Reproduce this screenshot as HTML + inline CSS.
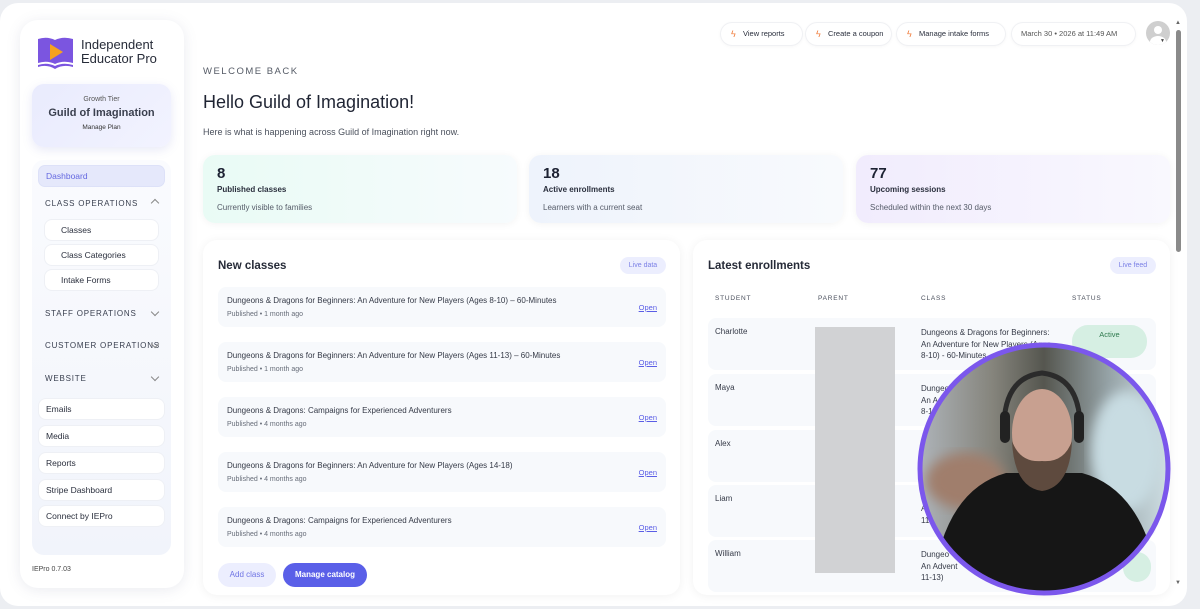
<!DOCTYPE html>
<html><head><meta charset="utf-8"><style>
*{box-sizing:border-box;margin:0;padding:0}
body{width:1200px;height:609px;overflow:hidden;background:#eceef2;font-family:"Liberation Sans",sans-serif;color:#1f2433;position:relative}
.app{position:absolute;left:0;top:3px;width:1187px;height:603px;background:#fff;border-radius:18px}
.abs{position:absolute}
.side{left:20px;top:20px;width:164px;height:568px;background:#fff;border-radius:18px;box-shadow:0 2px 14px rgba(90,100,140,.13)}
.tier{left:32px;top:84px;width:139px;height:63px;border-radius:12px;background:linear-gradient(135deg,#e9ebfd,#f2f3ff);box-shadow:0 3px 10px rgba(100,110,200,.15);text-align:center}
.nav{left:32px;top:160px;width:139px;height:395px;border-radius:12px;background:linear-gradient(180deg,#fafbfe,#f1f4fb)}
.item{position:absolute;background:#fff;border-radius:7px;font-size:8.5px;color:#2a2f3d;padding-left:16px;line-height:20px;height:20px;box-shadow:0 0 0 1px #eef0f5}
.mi{left:39px;width:125px;padding-left:7px}
.grp{position:absolute;left:45px;font-size:8px;letter-spacing:.8px;color:#3a4050}
.chev{position:absolute;left:152px;width:6px;height:6px;border-right:1px solid #888;border-bottom:1px solid #888;transform:rotate(45deg)}
.pill{position:absolute;top:23px;height:22px;border-radius:11px;background:#fff;box-shadow:0 0 0 1px #f0f1f4,0 1px 4px rgba(0,0,0,.05);font-size:7.5px;color:#2a2f3d;line-height:22px;padding-left:22px}
.pill b{position:absolute;left:10px;color:#f07b3a;font-weight:normal;font-size:9px}
.stat{position:absolute;top:155px;height:68px;width:314px;border-radius:12px;padding:10px 14px;box-shadow:0 1px 8px rgba(0,0,0,.05)}
.stat .n{font-size:15px;font-weight:bold;color:#1d2233}
.stat .l{font-size:8px;font-weight:bold;color:#2a2f3d;margin-top:3px}
.stat .s{font-size:8px;color:#555b68;margin-top:9px}
.panel{position:absolute;top:240px;height:355px;width:477px;background:#fff;border-radius:14px;box-shadow:0 1px 10px rgba(0,0,0,.06)}
.h{position:absolute;left:15px;top:20px;font-size:11.5px;font-weight:bold;color:#262b38}
.tag{position:absolute;top:17px;width:46px;height:17px;border-radius:9px;background:#eceefe;color:#7b80e6;font-size:7px;text-align:center;line-height:17px}
.li{position:absolute;left:15px;width:448px;height:40px;background:#f7f9fc;border-radius:8px}
.li .t{position:absolute;left:9px;top:9px;font-size:8px;color:#353a47}
.li .p{position:absolute;left:9px;top:24px;font-size:7px;color:#666c78}
.li .o{position:absolute;right:9px;top:16px;font-size:7.5px;color:#5b5ee6;text-decoration:underline}
.th{position:absolute;top:55px;font-size:6.5px;letter-spacing:.8px;color:#4a4f5c}
.row{position:absolute;left:15px;width:448px;height:52px;background:#f7f9fc;border-radius:8px}
.row .nm{position:absolute;left:7px;top:9px;font-size:8px;color:#353a47}
.row .c{position:absolute;left:213px;top:9px;font-size:8px;color:#353a47;line-height:11.5px;width:142px}
</style></head><body>
<div class="app"></div>
<div class="abs" style="left:1176px;top:30px;width:5px;height:222px;background:#8a8a8a;border-radius:3px"></div>
<div class="abs" style="left:1175px;top:20px;font-size:6px;color:#666">▲</div>
<div class="abs" style="left:1175px;top:580px;font-size:6px;color:#666">▼</div>

<div class="abs side"></div>
<svg class="abs" style="left:37px;top:35px" width="37" height="36" viewBox="0 0 37 36">
<path d="M1 4 Q10 1 18 5 Q26 1 36 4 V28 Q26 25 18 29 Q10 25 1 28Z" fill="#7b55e0"/>
<path d="M1 30 Q10 27 18 31 Q26 27 36 30 V32 Q26 29 18 34 Q10 29 1 32Z" fill="#7b55e0"/>
<path d="M13 9 L26 17 L13 25Z" fill="#f5a21f"/>
</svg>
<div class="abs" style="left:81px;top:38px;font-size:13px;line-height:14px;color:#262b38">Independent<br>Educator Pro</div>
<div class="abs tier"><div style="font-size:7px;color:#555;margin-top:12px">Growth Tier</div><div style="font-size:11px;font-weight:bold;color:#3a3f4e;margin-top:4px">Guild of Imagination</div><div style="font-size:6.5px;color:#333;margin-top:5px">Manage Plan</div></div>
<div class="abs nav"></div>
<div class="abs" style="left:39px;top:166px;width:125px;height:20px;border-radius:6px;background:#e5e8fb;color:#6468e0;font-size:8.5px;line-height:20px;padding-left:7px;box-shadow:0 0 0 1px #dde1f8">Dashboard</div>
<div class="grp" style="top:199px">CLASS OPERATIONS</div><div class="chev" style="top:200px;transform:rotate(225deg)"></div>
<div class="item" style="left:45px;top:220px;width:113px">Classes</div>
<div class="item" style="left:45px;top:245px;width:113px">Class Categories</div>
<div class="item" style="left:45px;top:270px;width:113px">Intake Forms</div>
<div class="grp" style="top:309px">STAFF OPERATIONS</div><div class="chev" style="top:309px"></div>
<div class="grp" style="top:341px">CUSTOMER OPERATIONS</div><div class="chev" style="top:341px"></div>
<div class="grp" style="top:374px">WEBSITE</div><div class="chev" style="top:374px"></div>
<div class="item mi" style="top:399px">Emails</div>
<div class="item mi" style="top:426px">Media</div>
<div class="item mi" style="top:453px">Reports</div>
<div class="item mi" style="top:480px">Stripe Dashboard</div>
<div class="item mi" style="top:506px">Connect by IEPro</div>
<div class="abs" style="left:32px;top:566px;font-size:7px;color:#444">IEPro 0.7.03</div>

<div class="pill" style="left:721px;width:81px"><b>ϟ</b>View reports</div>
<div class="pill" style="left:806px;width:85px"><b>ϟ</b>Create a coupon</div>
<div class="pill" style="left:897px;width:108px"><b>ϟ</b>Manage intake forms</div>
<div class="pill" style="left:1012px;width:123px;padding-left:9px;color:#555">March 30 • 2026 at 11:49 AM</div>
<div class="abs" style="left:1146px;top:21px;width:24px;height:24px;border-radius:50%;background:#cfcfcf;overflow:hidden"><div style="position:absolute;left:8px;top:5px;width:8px;height:8px;border-radius:50%;background:#fff"></div><div style="position:absolute;left:4px;top:15px;width:16px;height:12px;border-radius:50%;background:#fff"></div></div>
<div class="abs" style="left:1160px;top:38px;font-size:5px;color:#444">▼</div>

<div class="abs" style="left:203px;top:66px;font-size:9.5px;letter-spacing:1.5px;color:#555b66">WELCOME BACK</div>
<div class="abs" style="left:203px;top:92px;font-size:18px;color:#1f2433">Hello Guild of Imagination!</div>
<div class="abs" style="left:203px;top:127px;font-size:9px;color:#4a505c">Here is what is happening across Guild of Imagination right now.</div>

<div class="stat" style="left:203px;background:linear-gradient(90deg,#e9fbf5,#f7fbfd)"><div class="n">8</div><div class="l">Published classes</div><div class="s">Currently visible to families</div></div>
<div class="stat" style="left:529px;background:linear-gradient(90deg,#eef3fc,#f8fafd)"><div class="n">18</div><div class="l">Active enrollments</div><div class="s">Learners with a current seat</div></div>
<div class="stat" style="left:856px;background:linear-gradient(90deg,#f1ecfd,#f9f8fe)"><div class="n">77</div><div class="l">Upcoming sessions</div><div class="s">Scheduled within the next 30 days</div></div>

<div class="panel" style="left:203px">
<div class="h">New classes</div><div class="tag" style="left:417px">Live data</div>
<div class="li" style="top:47px"><div class="t">Dungeons &amp; Dragons for Beginners: An Adventure for New Players (Ages 8-10) – 60-Minutes</div><div class="p">Published • 1 month ago</div><div class="o">Open</div></div>
<div class="li" style="top:102px"><div class="t">Dungeons &amp; Dragons for Beginners: An Adventure for New Players (Ages 11-13) – 60-Minutes</div><div class="p">Published • 1 month ago</div><div class="o">Open</div></div>
<div class="li" style="top:157px"><div class="t">Dungeons &amp; Dragons: Campaigns for Experienced Adventurers</div><div class="p">Published • 4 months ago</div><div class="o">Open</div></div>
<div class="li" style="top:212px"><div class="t">Dungeons &amp; Dragons for Beginners: An Adventure for New Players (Ages 14-18)</div><div class="p">Published • 4 months ago</div><div class="o">Open</div></div>
<div class="li" style="top:267px"><div class="t">Dungeons &amp; Dragons: Campaigns for Experienced Adventurers</div><div class="p">Published • 4 months ago</div><div class="o">Open</div></div>
<div class="abs" style="left:15px;top:323px;width:58px;height:24px;border-radius:12px;background:#eceefe;color:#6f74e4;font-size:8px;text-align:center;line-height:24px">Add class</div>
<div class="abs" style="left:80px;top:323px;width:84px;height:24px;border-radius:12px;background:#5a5fe8;color:#fff;font-size:8px;font-weight:bold;text-align:center;line-height:24px">Manage catalog</div>
</div>

<div class="panel" style="left:693px">
<div class="h">Latest enrollments</div><div class="tag" style="left:417px">Live feed</div>
<div class="th" style="left:22px">STUDENT</div><div class="th" style="left:125px">PARENT</div><div class="th" style="left:228px">CLASS</div><div class="th" style="left:379px">STATUS</div>
<div class="row" style="top:78px"><div class="nm">Charlotte</div><div class="c">Dungeons &amp; Dragons for Beginners:<br>An Adventure for New Players (Ages<br>8-10) - 60-Minutes</div></div>
<div class="row" style="top:134px"><div class="nm">Maya</div><div class="c">Dungeons<br>An A<br>8-1</div></div>
<div class="row" style="top:190px"><div class="nm">Alex</div></div>
<div class="row" style="top:245px"><div class="nm">Liam</div><div class="c" style="top:18px">A<br>11</div></div>
<div class="row" style="top:300px"><div class="nm">William</div><div class="c">Dungeo<br>An Advent<br>11-13)</div></div>
<div class="abs" style="left:122px;top:87px;width:80px;height:246px;background:#d1d2d4"></div>
<div class="abs" style="left:379px;top:85px;width:75px;height:33px;border-radius:16px;background:#d6efe3;color:#2f7a4e;font-size:7.5px;text-align:center;padding-top:5px">Active</div>
<div class="abs" style="left:430px;top:312px;width:28px;height:30px;border-radius:14px;background:#d6efe3"></div>
</div>

<svg class="abs" style="left:916px;top:341px" width="256" height="256" viewBox="0 0 256 256">
<defs>
<clipPath id="c"><circle cx="128" cy="128" r="124"/></clipPath>
<linearGradient id="bg" x1="0" x2="1" y1="0" y2="0"><stop offset="0" stop-color="#b0b6bc"/><stop offset=".3" stop-color="#85847c"/><stop offset=".5" stop-color="#55564f"/><stop offset=".75" stop-color="#95a2a6"/><stop offset="1" stop-color="#d3e3e8"/></linearGradient>
<filter id="b"><feGaussianBlur stdDeviation="6"/></filter>
</defs>
<g clip-path="url(#c)">
<rect width="256" height="256" fill="url(#bg)"/>
<ellipse cx="50" cy="140" rx="40" ry="28" fill="#a07e6c" filter="url(#b)"/>
<ellipse cx="210" cy="110" rx="35" ry="60" fill="#c8dce2" filter="url(#b)"/>
<path d="M15 256 Q25 150 90 132 L166 132 Q232 150 245 256Z" fill="#161616"/>
<ellipse cx="126" cy="92" rx="30" ry="44" fill="#c8a090"/>
<path d="M96 100 Q98 146 126 150 Q154 146 156 100 Q148 122 126 120 Q104 122 96 100Z" fill="#5e4a3e"/>
<path d="M88 82 Q90 36 126 32 Q162 36 164 82" fill="none" stroke="#2b2b2b" stroke-width="5"/>
<rect x="84" y="70" width="10" height="32" rx="5" fill="#222"/>
<rect x="158" y="70" width="10" height="32" rx="5" fill="#222"/>
</g>
<circle cx="128" cy="128" r="124" fill="none" stroke="#7b57ec" stroke-width="5"/>
</svg>
</body></html>
